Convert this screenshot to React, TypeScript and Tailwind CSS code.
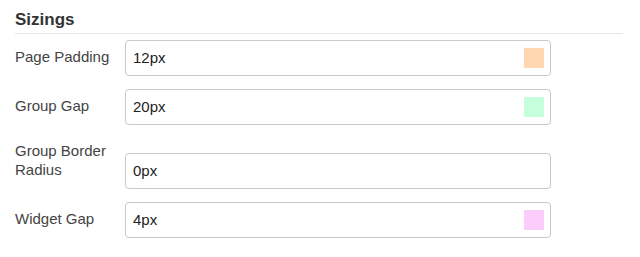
const rows = [
  { label: 'Page Padding', value: '12px', swatch: 'bg-[#ffd6b0]' },
  { label: 'Group Gap', value: '20px', swatch: 'bg-[#c6ffdb]' },
  { label: 'Group Border Radius', value: '0px', swatch: '' },
  { label: 'Widget Gap', value: '4px', swatch: 'bg-[#facdfd]' },
]

export default function App() {
  return (
    <div
      className="w-[640px] h-[257px] bg-white pl-[15px] pr-[17px] text-[#333]"
      style={{ fontFamily: '"Liberation Sans", Arial, sans-serif' }}
    >
      <div className="pt-[10px] pb-[3px] border-b border-[#e8e8e8] text-[17px] leading-[20px] font-bold text-[#333]">
        Sizings
      </div>

      <div className="flex flex-col gap-[13px] pt-[6px]">
        {rows.map((row) => (
          <div key={row.label} className="flex items-end gap-[10px]">
            <label className="w-[100px] shrink-0 pt-[3px] pb-[10px] text-[15px] leading-[19px] text-[#444]">
              {row.label}
            </label>
            <div className="w-[426px] h-[36px] flex items-center border border-[#c8c8c8] rounded-[4px] bg-white">
              <input
                type="text"
                readOnly
                value={row.value}
                className="flex-1 min-w-0 pl-[7px] text-[15px] text-[#222] bg-transparent outline-none"
              />
              {row.swatch && <div className={`w-[20px] h-[20px] mr-[6px] shrink-0 ${row.swatch}`} />}
            </div>
          </div>
        ))}
      </div>
    </div>
  )
}
